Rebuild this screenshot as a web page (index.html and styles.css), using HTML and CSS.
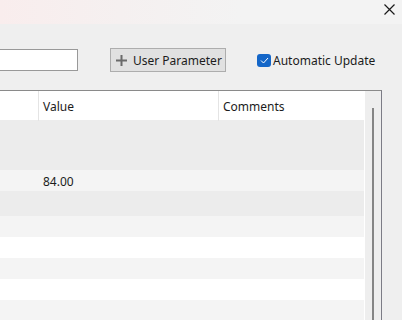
FILE: index.html
```html
<!DOCTYPE html>
<html lang="en">
<head>
    <meta charset="UTF-8">
    <title>Parameters</title>
    <link rel="stylesheet" href="styles.css">
</head>
<body>
    <div class="titlebar">
        <svg class="close" width="11" height="11" viewBox="0 0 11 11">
            <path d="M0.5 0.5 L10.5 10.5 M10.5 0.5 L0.5 10.5" stroke="#1a1a1a" stroke-width="1.2"/>
        </svg>
    </div>

    <div class="toolbar">
        <input type="text" class="filter">
        <button class="add-btn">
            <svg width="11" height="11" viewBox="0 0 11 11">
                <path d="M5.5 0 V11 M0 5.5 H11" stroke="#6a6a6a" stroke-width="2"/>
            </svg>
            User Parameter
        </button>
        <label class="auto-update">
            <span class="check">
                <svg width="9" height="7" viewBox="0 0 9 7">
                    <path d="M1 3.5 L3.5 6 L8 1" fill="none" stroke="#fff" stroke-width="1"/>
                </svg>
            </span>
            Automatic Update
        </label>
    </div>

    <div class="table">
        <div class="grid">
            <div class="row header">
                <div class="cell"></div>
                <div class="cell">Value</div>
                <div class="cell">Comments</div>
            </div>
            <div class="row group"><div class="cell"></div><div class="cell"></div><div class="cell"></div></div>
            <div class="row group"><div class="cell"></div><div class="cell"></div><div class="cell"></div></div>
            <div class="row odd"><div class="cell"></div><div class="cell">84.00</div><div class="cell"></div></div>
            <div class="row group"><div class="cell"></div><div class="cell"></div><div class="cell"></div></div>
            <div class="row odd"><div class="cell"></div><div class="cell"></div><div class="cell"></div></div>
            <div class="row even"><div class="cell"></div><div class="cell"></div><div class="cell"></div></div>
            <div class="row odd"><div class="cell"></div><div class="cell"></div><div class="cell"></div></div>
            <div class="row even"><div class="cell"></div><div class="cell"></div><div class="cell"></div></div>
            <div class="row odd"><div class="cell"></div><div class="cell"></div><div class="cell"></div></div>
        </div>
        <div class="scrollbar">
            <div class="thumb"></div>
        </div>
    </div>
</body>
</html>
```

FILE: styles.css
```css
* {
    margin: 0;
    padding: 0;
    box-sizing: border-box;
}

body {
    width: 402px;
    height: 320px;
    overflow: hidden;
    background: #efefef;
    font-family: "Noto Sans", sans-serif;
    font-size: 12px;
    color: #1c1c1c;
}


.titlebar {
    height: 24px;
    display: flex;
    justify-content: flex-end;
    align-items: flex-start;
    padding: 4px 7px 0 0;
    background: linear-gradient(90deg, #f9eded 0%, #f5f0f0 30%, #f3f3f3 60%);
}


.toolbar {
    height: 66px;
    display: flex;
    align-items: flex-start;
    padding-top: 24px;
}

.filter {
    width: 78px;
    height: 22px;
    margin-top: 1px;
    border: 1px solid #999;
    border-left: none;
    background: white;
    outline: none;
}

.add-btn {
    display: flex;
    align-items: center;
    gap: 6px;
    width: 116px;
    height: 24px;
    margin-left: 32px;
    padding-left: 5px;
    background: #e1e1e1;
    border: 1px solid #adadad;
    font-family: inherit;
    font-size: 12px;
    color: #1c1c1c;
}

.auto-update {
    display: flex;
    align-items: center;
    gap: 2px;
    margin-left: 31px;
    height: 24px;
}

.check {
    width: 14px;
    height: 13px;
    border-radius: 3px;
    background: #1466c8;
    display: flex;
    align-items: center;
    justify-content: center;
}


.table {
    width: 382px;
    height: 240px;
    display: flex;
    border-top: 1px solid #8a8a8a;
    border-right: 1px solid #7c7c86;
}

.grid {
    width: 365px;
    background: white;
}

.row {
    display: grid;
    grid-template-columns: 39px 180px 1fr;
    height: 21px;
    margin-right: 1px;
}

.row .cell {
    padding: 1px 0 0 4px;
    line-height: 21px;
}

.header {
    height: 29px;
    background: white;
    margin-right: 0;
}

.header .cell {
    line-height: 29px;
    border-right: 1px solid #e4e4e4;
}

.header .cell:first-child {
    padding-left: 0;
}

.header .cell:last-child {
    border-right: none;
}

.group {
    height: 25px;
    background: #ececec;
}

.odd {
    background: #f4f4f4;
}

.even {
    background: white;
}


.scrollbar {
    flex: 1;
    background: #eeeeee;
    padding: 17px 0 0 7px;
}

.thumb {
    width: 2px;
    height: 100%;
    background: #858585;
}
```
